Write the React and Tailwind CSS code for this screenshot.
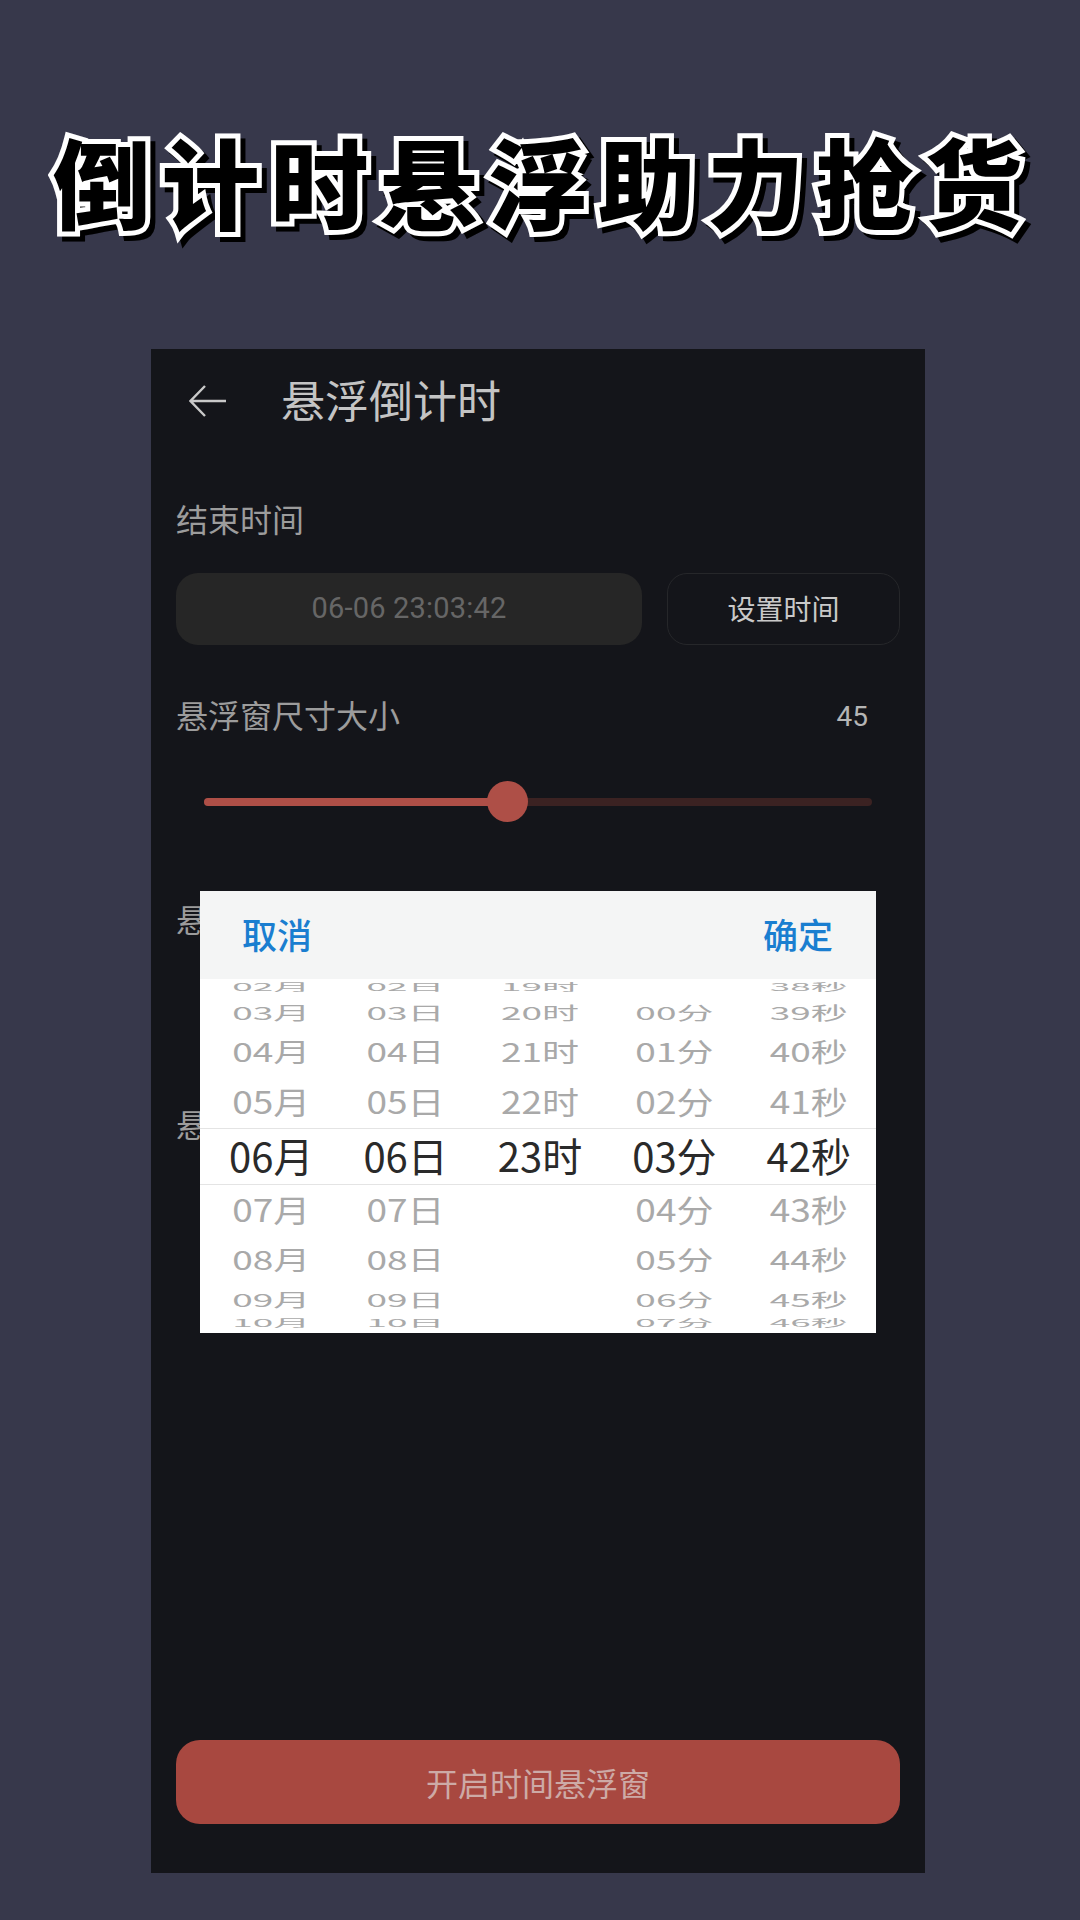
const rows = [
  { h: "h-[19px] pb-[3px]", scale: "scale-y-[0.28]" },
  { h: "h-[30px]", scale: "scale-y-[0.48]" },
  { h: "h-[48px]", scale: "scale-y-[0.7]" },
  { h: "h-[52px] pb-[2px]", scale: "scale-y-[0.84]" },
  { h: "h-[56px]", scale: "" },
  { h: "h-[50px]", scale: "scale-y-[0.84]" },
  { h: "h-[52px]", scale: "scale-y-[0.7]" },
  { h: "h-[28px]", scale: "scale-y-[0.48]" },
  { h: "h-[19px]", scale: "scale-y-[0.28]" },
];

const columns = [
  ["02月", "03月", "04月", "05月", "06月", "07月", "08月", "09月", "10月"],
  ["02日", "03日", "04日", "05日", "06日", "07日", "08日", "09日", "10日"],
  ["19时", "20时", "21时", "22时", "23时", "", "", "", ""],
  ["", "00分", "01分", "02分", "03分", "04分", "05分", "06分", "07分"],
  ["38秒", "39秒", "40秒", "41秒", "42秒", "43秒", "44秒", "45秒", "46秒"],
];

function Picker() {
  return (
    <div className="absolute left-[49px] top-[542px] w-[676px] h-[442px] bg-white overflow-hidden">
      <div className="h-[88px] bg-[#f4f5f5] flex items-center justify-between pl-[42px] pr-[43px] text-[35px] font-medium text-[#1a7ed0]">
        <span className="-translate-y-px">取消</span>
        <span className="-translate-y-px">确定</span>
      </div>

      <div className="relative grid grid-cols-5 pl-[4px]">
        <div className="absolute left-0 right-0 top-[149px] h-[57px] border-y border-[#e4e4e4]" />
        {columns.map((col, i) => (
          <div key={i} className="flex flex-col items-center">
            {col.map((text, j) => (
              <div key={j} className={`${rows[j].h} flex items-center justify-center overflow-visible`}>
                {j === 4 ? (
                  <span className="-translate-y-px text-[40px] leading-none text-[#2a2a2a]">{text}</span>
                ) : (
                  <span className={`${rows[j].scale} -translate-y-px text-[37px] leading-none text-[#a9a9a9]`}>{text}</span>
                )}
              </div>
            ))}
          </div>
        ))}
      </div>
    </div>
  );
}

export default function App() {
  return (
    <div className="w-[1080px] h-[1920px] bg-[#37384b] flex flex-col items-center overflow-hidden font-['Noto_Sans_CJK_SC','Noto_Sans',sans-serif]">
      <h1 className="mt-[114px] h-[129px] flex items-center text-[98px] leading-none font-black tracking-[11px] pl-[6px] text-black whitespace-nowrap [-webkit-text-stroke:10px_white] [paint-order:stroke_fill] drop-shadow-[5px_5px_0_#000]">
        倒计时悬浮助力抢货
      </h1>

      <div className="relative mt-[106px] mr-[4px] w-[774px] h-[1524px] bg-[#14151a] flex flex-col px-[25px]">
        <div className="h-[104px] flex items-center">
          <svg width="38" height="32" viewBox="0 0 38 32" fill="none" stroke="#c9c9c9" strokeWidth="2.4" className="ml-[13px]">
            <path d="M37 16H2M16 1 1.5 16 16 31" />
          </svg>
          <span className="ml-[54px] -translate-y-[2px] text-[44px] text-[#c4c4c4] leading-none">悬浮倒计时</span>
        </div>

        <div className="mt-[45px] h-[40px] flex items-center text-[32px] text-[#9c9c9c]">结束时间</div>

        <div className="mt-[35px] flex gap-[25px]">
          <div className="w-[466px] h-[72px] rounded-[22px] bg-[#262626] flex items-center justify-center font-['Roboto',sans-serif] text-[29px] tracking-[0.2px] text-[#666666]">
            06-06 23:03:42
          </div>
          <button className="flex-1 h-[72px] rounded-[20px] border border-[#26272a] text-[28px] text-[#c9c9c9]">
            <span className="block -translate-y-px">设置时间</span>
          </button>
        </div>

        <div className="mt-[49px] h-[40px] flex items-center justify-between pr-[32px] text-[32px] text-[#9c9c9c]">
          <span>悬浮窗尺寸大小</span>
          <span className="translate-y-[3px] font-['Roboto',sans-serif] text-[28px] text-[#b5b5b5]">45</span>
        </div>

        <div className="mt-[47px] mx-[28px] h-[41px] relative flex items-center">
          <div className="w-full h-[8px] rounded-full bg-[#3b2222] overflow-hidden">
            <div className="w-[46%] h-full bg-[#ae4f47]" />
          </div>
          <div className="absolute left-[283px] top-0 w-[41px] h-[41px] rounded-full bg-[#ae4f47]" />
        </div>

        <div className="mt-[76px] w-[24px] h-[40px] overflow-hidden flex items-center whitespace-nowrap text-[32px] text-[#9c9c9c]">悬</div>
        <div className="mt-[165px] w-[24px] h-[40px] overflow-hidden flex items-center whitespace-nowrap text-[32px] text-[#9c9c9c]">悬</div>

        <button className="mt-auto mb-[49px] h-[84px] rounded-[24px] bg-[#a84840] text-[32px] text-[#cdaaa6]">
          开启时间悬浮窗
        </button>

        <Picker />
      </div>
    </div>
  );
}
